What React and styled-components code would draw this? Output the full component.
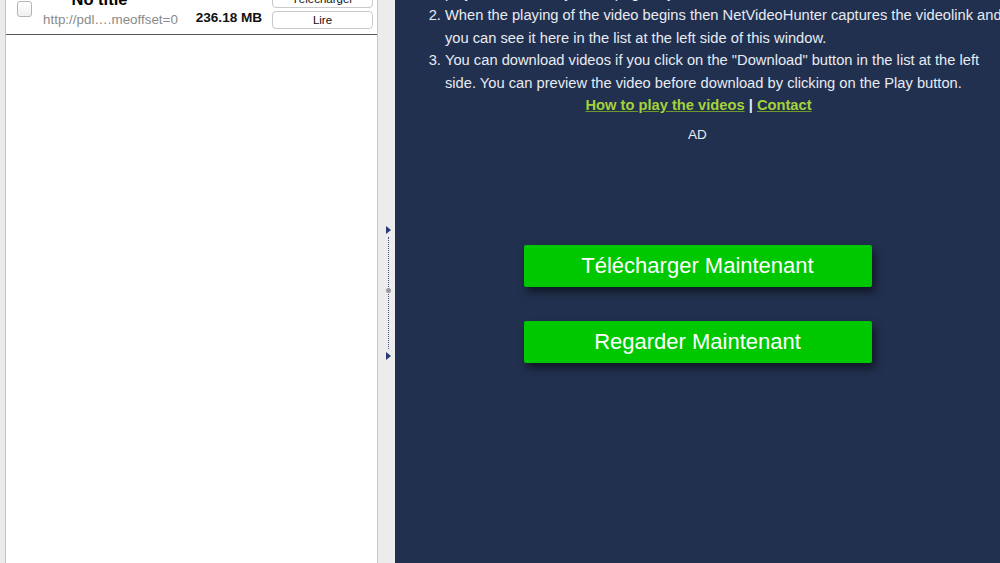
import React from 'react';
import styled, { createGlobalStyle } from 'styled-components';

const GlobalStyle = createGlobalStyle`
  html, body {
    margin: 0;
    padding: 0;
    overflow: hidden;
    font-family: "Liberation Sans", Arial, sans-serif;
  }
`;

const colors = {
  navy: '#22304f',
  text: '#e7ebf3',
  link: '#a3d23a',
  green: '#00c800',
  gutter: '#ebebeb',
  line: '#c4c4c4',
};

const Window = styled.div`
  display: flex;
  width: 1000px;
  height: 563px;
  overflow: hidden;
`;

const Gutter = styled.div`
  width: 5px;
  background-color: ${colors.gutter};
  border-right: 1px solid ${colors.line};
`;

const ListPanel = styled.section`
  width: 371px;
  background-color: #fff;
  border-right: 1px solid #c9c9c9;
  overflow: hidden;
`;

const VideoRow = styled.div`
  display: flex;
  align-items: flex-end;
  margin-top: -11px;
  padding: 0 4px 5px 11px;
  border-bottom: 1px solid #5a5a5a;
`;

const Checkbox = styled.span`
  width: 13px;
  height: 14px;
  margin: 0 11px 12px 0;
  border: 1px solid #b4b4b4;
  border-radius: 3px;
  background: linear-gradient(#ffffff, #f0f0f0);
  flex-shrink: 0;
`;

const Info = styled.div`
  display: flex;
  flex-direction: column;
  width: 154px;
`;

const Title = styled.h2`
  margin: 0 0 2px;
  width: 113px;
  text-align: center;
  font-size: 16.5px;
  font-weight: bold;
  color: #000;
  line-height: 20px;
`;

const Url = styled.span`
  font-size: 13.4px;
  color: #8a8a8a;
  line-height: 18px;
  white-space: nowrap;
`;

const Size = styled.span`
  width: 77px;
  margin-bottom: 2px;
  font-size: 13.6px;
  font-weight: bold;
  color: #111;
  line-height: 18px;
  white-space: nowrap;
`;

const Actions = styled.div`
  display: flex;
  flex-direction: column;
  gap: 3px;
`;

const SmallButton = styled.button`
  width: 101px;
  height: 18px;
  padding: 0;
  border: 1px solid #c9c9c9;
  border-radius: 4px;
  background-color: #fff;
  font-family: "Liberation Sans", Arial, sans-serif;
  font-size: 11.5px;
  color: #111;
  line-height: 16px;
`;

const Splitter = styled.div`
  width: 17px;
  background-color: #ececec;
  display: flex;
  flex-direction: column;
  align-items: flex-start;
  padding-top: 226px;
  padding-left: 8px;
  box-sizing: border-box;
`;

const Arrow = styled.svg`
  width: 5px;
  height: 8px;
`;

const DottedTrack = styled.div`
  position: relative;
  height: 112px;
  margin: 3px 0 3px 2px;
  border-left: 1px dotted #4a5080;
`;

const Grip = styled.span`
  position: absolute;
  top: 51px;
  left: -3px;
  width: 5px;
  height: 5px;
  border-radius: 50%;
  background-color: #9a9a9a;
`;

const ContentPanel = styled.main`
  flex: 1;
  background-color: ${colors.navy};
  color: ${colors.text};
  display: flex;
  flex-direction: column;
  align-items: center;
  font-size: 14.7px;
`;

const Steps = styled.ol`
  align-self: stretch;
  margin: -18px -5px 0 50px;
  padding: 0;
  line-height: 22.4px;
  list-style-position: outside;
`;

const Step = styled.li`
  padding-left: 0;
`;

const LinksLine = styled.p`
  margin: 0 0 0 2px;
  line-height: 22px;
  font-weight: bold;
`;

const Link = styled.a`
  color: ${colors.link};
  text-decoration: underline;
  text-decoration-color: #6f9a2a;
`;

const AdLabel = styled.span`
  margin-top: 11px;
  font-size: 13.5px;
  line-height: 16px;
`;

const ButtonStack = styled.div`
  display: flex;
  flex-direction: column;
  gap: 34px;
  margin-top: 102px;
`;

const BigButton = styled.button`
  width: 348px;
  height: 42px;
  border: none;
  border-radius: 2px;
  background-color: ${colors.green};
  color: #fff;
  font-family: "Liberation Sans", Arial, sans-serif;
  font-size: 22px;
  box-shadow: 3px 5px 8px rgba(0, 0, 0, 0.55);
`;

const ArrowIcon = () => (
  <Arrow viewBox="0 0 5 8">
    <path d="M0 0 L5 4 L0 8 Z" fill="#2b3a72" />
  </Arrow>
);

const App = () => (
  <Window>
    <GlobalStyle />
    <Gutter />
    <ListPanel>
      <VideoRow>
        <Checkbox />
        <Info>
          <Title>No title</Title>
          <Url>http://pdl….meoffset=0</Url>
        </Info>
        <Size>236.18 MB</Size>
        <Actions>
          <SmallButton type="button">Télécharger</SmallButton>
          <SmallButton type="button">Lire</SmallButton>
        </Actions>
      </VideoRow>
    </ListPanel>
    <Splitter>
      <ArrowIcon />
      <DottedTrack>
        <Grip />
      </DottedTrack>
      <ArrowIcon />
    </Splitter>
    <ContentPanel>
      <Steps>
        <Step>play a video on any video page in your browser.</Step>
        <Step>
          When the playing of the video begins then NetVideoHunter captures the videolink and
          you can see it here in the list at the left side of this window.
        </Step>
        <Step>
          You can download videos if you click on the "Download" button in the list at the left
          side. You can preview the video before download by clicking on the Play button.
        </Step>
      </Steps>
      <LinksLine>
        <Link href="#">How to play the videos</Link> | <Link href="#">Contact</Link>
      </LinksLine>
      <AdLabel>AD</AdLabel>
      <ButtonStack>
        <BigButton type="button">Télécharger Maintenant</BigButton>
        <BigButton type="button">Regarder Maintenant</BigButton>
      </ButtonStack>
    </ContentPanel>
  </Window>
);

export default App;
